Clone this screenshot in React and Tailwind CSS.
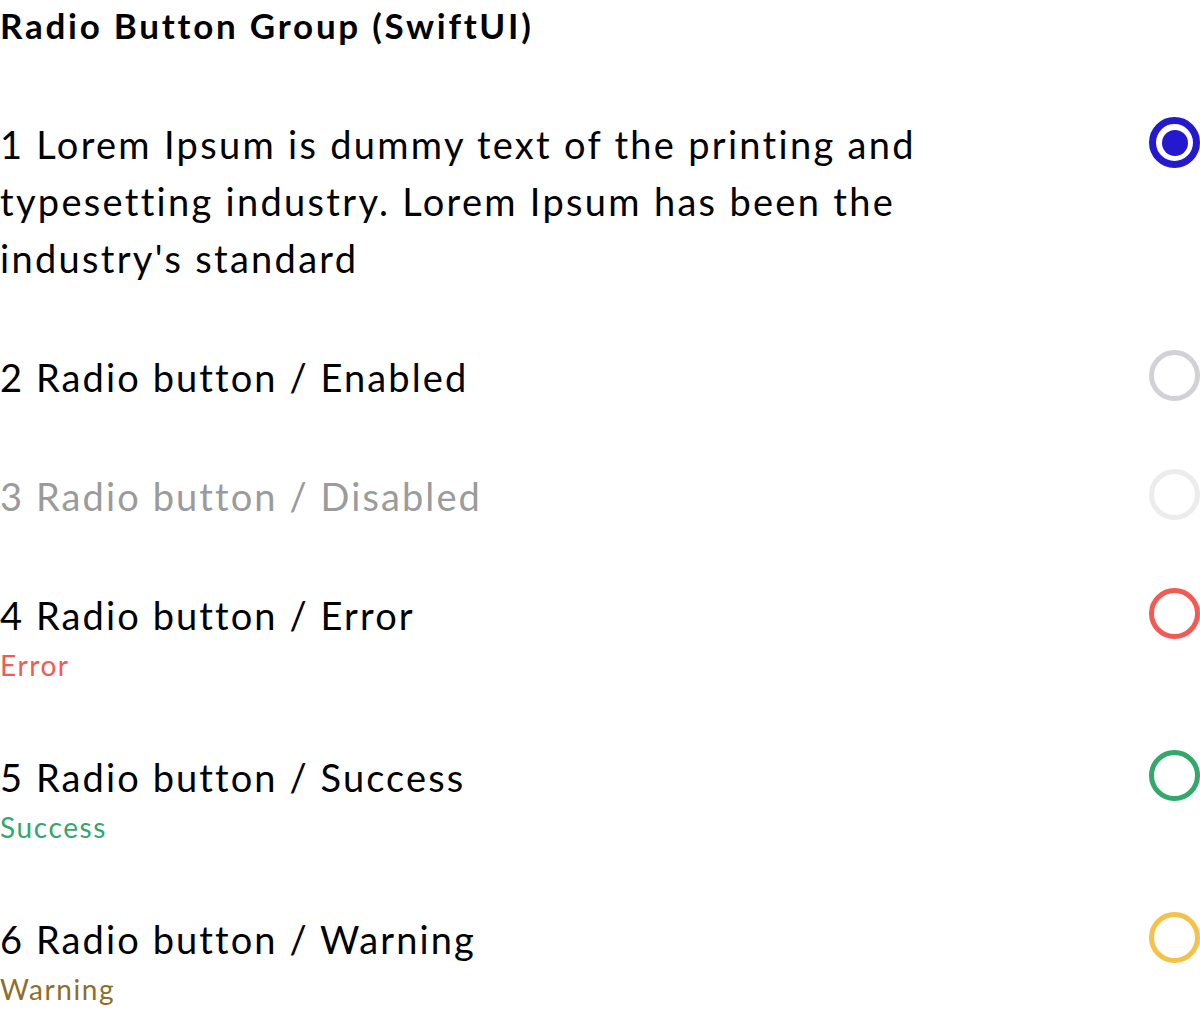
import React from "react";

const font = { fontFamily: "Lato, 'Noto Sans', sans-serif" };

function Radio({ variant }) {
  if (variant === "selected") {
    return (
      <div className="mt-px flex h-[51px] w-[51px] shrink-0 items-center justify-center rounded-full border-[7px] border-[#2419cf]">
        <div className="h-[26px] w-[26px] rounded-full bg-[#2419cf]" />
      </div>
    );
  }
  const colors = {
    enabled: "border-[#d1d1d6]",
    disabled: "border-[#ececee]",
    error: "border-[#f25a55]",
    success: "border-[#33a76c]",
    warning: "border-[#f4c24b]",
  };
  return (
    <div
      className={
        "mt-px h-[51px] w-[51px] shrink-0 rounded-full border-[5px] " +
        colors[variant]
      }
    />
  );
}

function Row({ label, sub, subClass, variant, labelClass = "text-black" }) {
  return (
    <div className="flex items-start justify-between">
      <div className="flex flex-col">
        <div className={"text-[38px] leading-[57px] tracking-[2.1px] " + labelClass}>
          {label}
        </div>
        {sub && (
          <div className={"text-[28px] leading-[43px] tracking-[1.6px] " + subClass}>
            {sub}
          </div>
        )}
      </div>
      <Radio variant={variant} />
    </div>
  );
}

export default function App() {
  return (
    <div className="w-[1200px] bg-white [font-variant-ligatures:none]" style={font}>
      <div className="text-[35px] font-bold leading-[50px] tracking-[2.75px] text-black">
        Radio Button Group (SwiftUI)
      </div>
      <div className="mt-[66px] flex flex-col gap-[62px]">
        <div className="flex items-start justify-between">
          <div className="w-[960px] text-[38px] leading-[57px] tracking-[2.3px] text-black">
            1 Lorem Ipsum is dummy text of the printing and typesetting industry.
            Lorem Ipsum has been the industry's standard
          </div>
          <Radio variant="selected" />
        </div>
        <Row label="2 Radio button / Enabled" variant="enabled" />
        <Row
          label="3 Radio button / Disabled"
          variant="disabled"
          labelClass="text-[#9b9b9b]"
        />
        <Row
          label="4 Radio button / Error"
          sub="Error"
          subClass="text-[#f25a55]"
          variant="error"
        />
        <Row
          label="5 Radio button / Success"
          sub="Success"
          subClass="text-[#33a76c]"
          variant="success"
        />
        <Row
          label="6 Radio button / Warning"
          sub="Warning"
          subClass="text-[#8d6e2b]"
          variant="warning"
        />
      </div>
    </div>
  );
}
